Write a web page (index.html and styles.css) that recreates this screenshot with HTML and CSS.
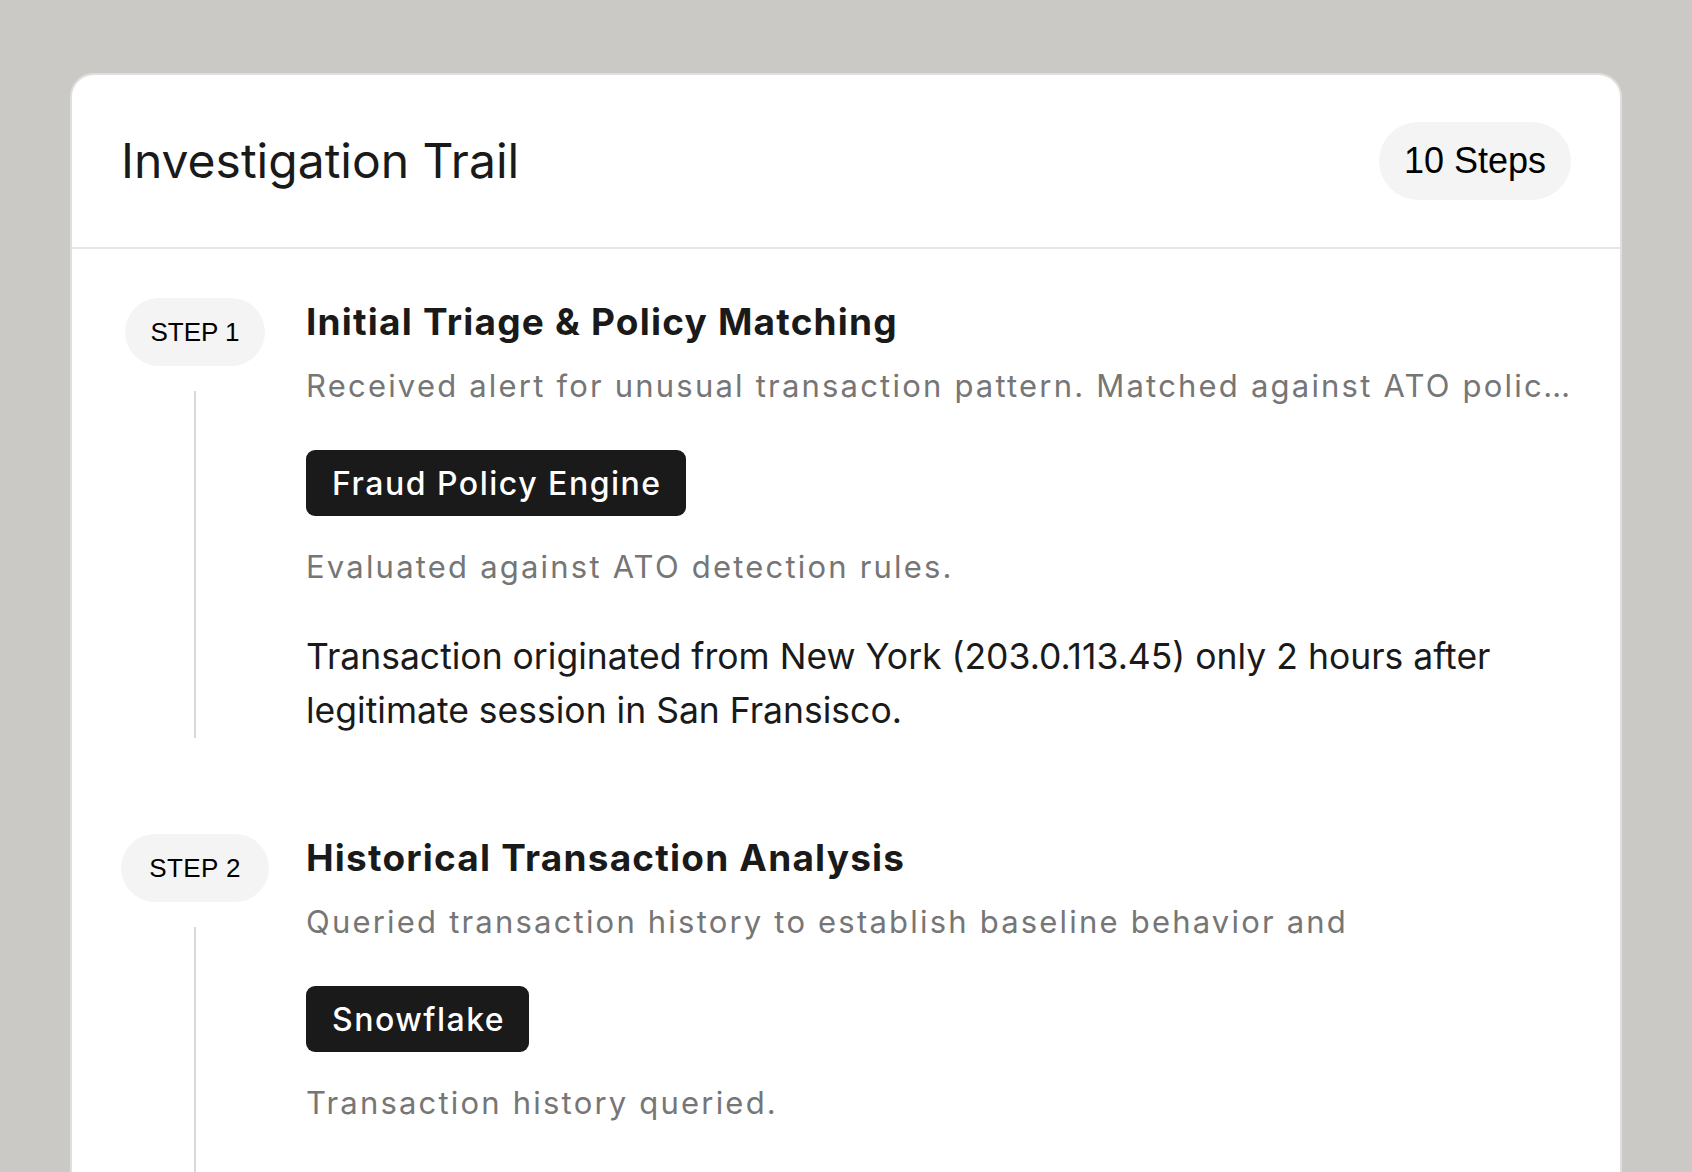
FILE: index.html
```html
<!DOCTYPE html>
<html lang="en">
<head>
<meta charset="utf-8">
<title>Investigation Trail</title>
<link rel="stylesheet" href="styles.css">
</head>
<body>
<div class="page">
  <section class="card">
    <header class="card-header">
      <h1 class="card-title">Investigation Trail</h1>
      <span class="count-pill">10 Steps</span>
    </header>
    <div class="card-body">
      <article class="step">
        <div class="rail">
          <span class="step-pill">STEP 1</span>
          <span class="rail-line"></span>
        </div>
        <div class="step-content">
          <h2 class="step-title">Initial Triage &amp; Policy Matching</h2>
          <p class="step-desc">Received alert for unusual transaction pattern. Matched against ATO policy rules and prior account activity.</p>
          <span class="tool-tag">Fraud Policy Engine</span>
          <p class="step-result">Evaluated against ATO detection rules.</p>
          <p class="step-finding">Transaction originated from New York (203.0.113.45) only 2 hours after legitimate session in San Fransisco.</p>
        </div>
      </article>
      <article class="step step-open">
        <div class="rail">
          <span class="step-pill step-pill-wide">STEP 2</span>
          <span class="rail-line"></span>
        </div>
        <div class="step-content">
          <h2 class="step-title">Historical Transaction Analysis</h2>
          <p class="step-desc">Queried transaction history to establish baseline behavior and</p>
          <span class="tool-tag">Snowflake</span>
          <p class="step-result">Transaction history queried.</p>
        </div>
      </article>
    </div>
  </section>
</div>
</body>
</html>
```
FILE: styles.css
```css
* { box-sizing: border-box; }
html, body {
  margin: 0;
  padding: 0;
  height: 100%;
  overflow: hidden;
}
body {
  background: #cac9c5;
  font-family: Inter, "Liberation Sans", sans-serif;
  color: #1a1a1a;
}
.page {
  padding: 73px 70px 0 70px;
}
.card {
  background: #ffffff;
  border: 2px solid #dfdfde;
  border-bottom: none;
  border-radius: 24px 24px 0 0;
  min-height: 1200px;
}
.card-header {
  display: flex;
  align-items: center;
  justify-content: space-between;
  height: 174px;
  padding: 0 49px;
  border-bottom: 2px solid #e6e6e6;
}
.card-title {
  margin: 0;
  font-size: 48px;
  font-weight: 400;
  line-height: 1;
  color: #1a1a1a;
}
.count-pill {
  display: inline-flex;
  align-items: center;
  height: 78px;
  padding: 0 25px;
  border-radius: 39px;
  background: #f4f4f4;
  font-family: "Liberation Sans", Arial, sans-serif;
  font-size: 36px;
  color: #000;
}
.card-body {
  padding: 49px 49px 0 49px;
}
.step {
  display: flex;
  margin-bottom: 96px;
}
.step-open {
  min-height: 420px;
}
.rail {
  width: 148px;
  flex: 0 0 148px;
  display: flex;
  flex-direction: column;
  align-items: center;
}
.step-pill {
  display: inline-flex;
  align-items: center;
  justify-content: center;
  height: 68px;
  padding: 0 25px;
  border-radius: 34px;
  background: #f4f4f4;
  font-family: "Liberation Sans", Arial, sans-serif;
  font-size: 26px;
  color: #000;
  white-space: nowrap;
}
.step-pill-wide {
  padding: 0 28px;
  letter-spacing: 0.4px;
}
.rail-line {
  flex: 1;
  width: 2px;
  margin-top: 25px;
  background: #d9d9d9;
}
.step-content {
  flex: 1;
  min-width: 0;
  margin-left: 37px;
  display: flex;
  flex-direction: column;
  align-items: flex-start;
}
.step-title {
  margin: 2px 0 0 0;
  font-size: 37px;
  font-weight: 700;
  line-height: 44px;
  letter-spacing: 1.2px;
  color: #1a1a1a;
}
.step-desc {
  margin: 18px 0 0 0;
  width: 100%;
  font-size: 31px;
  line-height: 48px;
  letter-spacing: 2.2px;
  color: #767676;
  white-space: nowrap;
  overflow: hidden;
  text-overflow: ellipsis;
}
.tool-tag {
  display: inline-flex;
  align-items: center;
  height: 66px;
  margin-top: 40px;
  padding: 0 24px 0 26px;
  border-radius: 9px;
  background: #1a1a1a;
  color: #ffffff;
  font-size: 32px;
  font-weight: 500;
  letter-spacing: 1.5px;
}
.step-result {
  margin: 27px 0 0 0;
  font-size: 31px;
  line-height: 48px;
  letter-spacing: 2.2px;
  color: #767676;
}
.step-finding {
  margin: 39px 0 0 0;
  font-size: 35.5px;
  line-height: 54px;
  color: #1a1a1a;
}
```
